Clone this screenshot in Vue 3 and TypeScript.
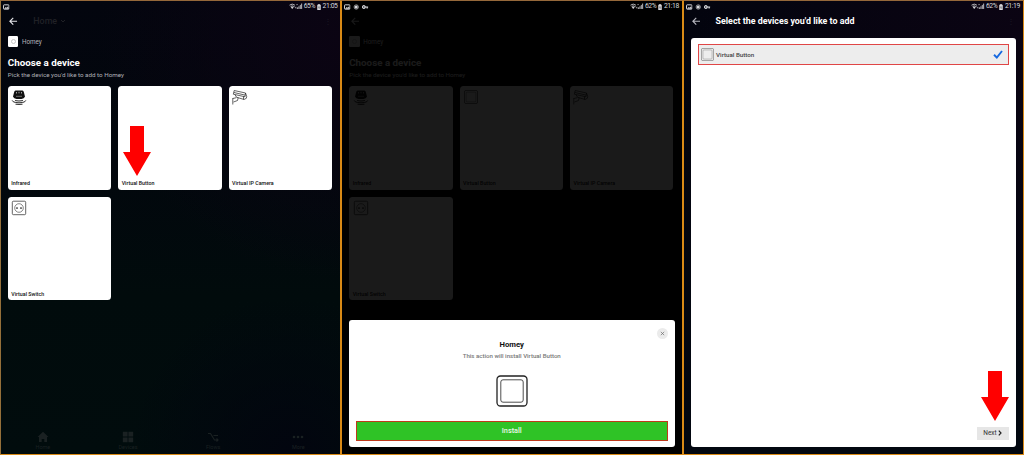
<script setup lang="ts">
interface Device {
  name: string
  icon: string
}

interface NavItem {
  label: string
  icon: string
}

const devices: Device[] = [
  { name: 'Infrared', icon: 'infrared' },
  { name: 'Virtual Button', icon: 'button' },
  { name: 'Virtual IP Camera', icon: 'camera' },
  { name: 'Virtual Switch', icon: 'socket' },
]

const navItems: NavItem[] = [
  { label: 'Home', icon: 'home' },
  { label: 'Devices', icon: 'grid' },
  { label: 'Flows', icon: 'flow' },
  { label: 'More', icon: 'more' },
]

const screens = [
  { id: 'choose', battery: '65%', time: '21:05', notices: ['photo'] },
  { id: 'install', battery: '62%', time: '21:18', notices: ['photo', 'disc', 'key'] },
  { id: 'select', battery: '62%', time: '21:19', notices: ['photo', 'disc', 'key'] },
]
</script>

<template>
  <svg class="defs" width="0" height="0" aria-hidden="true">
    <symbol id="photo" viewBox="0 0 12 10">
      <rect x="1" y="1" width="10" height="8" rx="1" fill="none" stroke="currentColor" stroke-width="1.8" />
      <path d="M2 8l3-3 2 1.5L9 4l2 4z" fill="currentColor" />
    </symbol>
    <symbol id="disc" viewBox="0 0 12 10">
      <circle cx="6" cy="5" r="4" fill="none" stroke="currentColor" stroke-width="1.2" />
      <circle cx="6" cy="5" r="2.8" fill="currentColor" />
    </symbol>
    <symbol id="key" viewBox="0 0 12 10">
      <circle cx="3.4" cy="5" r="2.4" fill="none" stroke="currentColor" stroke-width="2.2" />
      <path d="M5 5h6.5M9.5 5v2.8" stroke="currentColor" stroke-width="2.2" fill="none" />
    </symbol>
    <symbol id="signal" viewBox="0 0 26 12">
      <path d="M1 4q5-4 10 0M3 6.5q3-2.5 6 0" fill="none" stroke="currentColor" stroke-width="1.6" />
      <path d="M4 7.5h4l-2 3zM10 6l3 4M13 7v3" fill="currentColor" stroke="currentColor" stroke-width="1" />
      <path d="M14 2l2 2M16 2l-2 2" stroke="currentColor" />
      <path d="M16 11V8M18.5 11V6M21 11V3.5M23.5 11V1" stroke="currentColor" stroke-width="1.6" />
    </symbol>
    <symbol id="battery" viewBox="0 0 8 12">
      <path d="M2.5 0h3v1.5H7.5V12H.5V1.5h2z" fill="currentColor" />
      <path d="M4.5 4L3 7h2l-1 3" fill="none" stroke="#222" stroke-width=".8" />
    </symbol>
    <symbol id="back" viewBox="0 0 10 10">
      <path d="M9.5 5H1.3M5 1L1 5l4 4" fill="none" stroke="currentColor" stroke-width="1.3" />
    </symbol>
    <symbol id="infrared" viewBox="0 0 16 16">
      <path d="M4.5 1.5h7q1 .2 1.400 1.800l1.100 4.400q-1 2-3.500 2.300h-5Q3 9.700 2 7.700l1.100-4.400Q3.500 1.700 4.500 1.500z" fill="currentColor" />
      <path d="M5.500 3v1.500M8 2.800v1.500M10.500 3v1.500" stroke="#fff" stroke-width=".6" />
      <path d="M5 7.300h6" stroke="#fff" stroke-width=".4" />
      <path d="M4 11.600q4 .8 8 0M1.200 11.400q.3 1.500 3.300 2.100 3.500.6 7 0 3-.6 3.300-2.100M4.500 15.200q3.500.5 7 0" fill="none" stroke="currentColor" stroke-width=".9" />
    </symbol>
    <symbol id="button" viewBox="0 0 32 32">
      <rect x="1" y="1" width="30" height="30" rx="3.5" fill="none" stroke="currentColor" stroke-width="1.3" />
      <rect x="4.8" y="4.8" width="22.4" height="22.4" rx="2.2" fill="none" stroke="currentColor" stroke-width=".8" />
    </symbol>
    <symbol id="camera" viewBox="0 0 16 16">
      <path d="M2.200 1.500L13.500 4 13 7.800 1.300 5.200zM2 3.500l11 2.600M13.500 4l1.200 3.500-.4 1.800-2.300 1.200L4.500 8.200 3 5.700M11.500 7.500v2.800M6.200 8.700L5.500 11.500 1.500 13M.8 9v6.500M.8 9.500l3.500-.8" fill="none" stroke="currentColor" stroke-width=".65" />
    </symbol>
    <symbol id="socket" viewBox="0 0 16 16">
      <rect x="1.300" y="1.200" width="13.400" height="13.500" rx="1.200" fill="none" stroke="currentColor" stroke-width=".65" />
      <circle cx="8" cy="8" r="4.300" fill="none" stroke="currentColor" stroke-width=".5" />
      <circle cx="6" cy="8" r=".85" fill="currentColor" />
      <circle cx="10" cy="8" r=".85" fill="currentColor" />
    </symbol>
    <symbol id="home" viewBox="0 0 12 12">
      <path d="M6 .8L11.500 6H10v5H7.300V8H4.700v3H2V6H.5z" fill="currentColor" />
    </symbol>
    <symbol id="grid" viewBox="0 0 12 12">
      <path d="M.8.8h4.800v4.800H.8zM6.400.8h4.800v4.800H6.400zM.8 6.400h4.800v4.800H.8zM6.400 6.400h4.800v4.800H6.400z" fill="currentColor" />
    </symbol>
    <symbol id="flow" viewBox="0 0 12 12">
      <path d="M1 2.500h2.500l4 6.500H11M6.500 4.500H11M9.500 7.500L11 9 9.500 10.500" fill="none" stroke="currentColor" stroke-width="1.200" />
    </symbol>
    <symbol id="more" viewBox="0 0 12 12">
      <circle cx="2" cy="6" r="1.300" fill="currentColor" />
      <circle cx="6" cy="6" r="1.300" fill="currentColor" />
      <circle cx="10" cy="6" r="1.300" fill="currentColor" />
    </symbol>
    <symbol id="arrow" viewBox="0 0 28 50">
      <path d="M7 0h14v26h7L14 50 0 26h7z" fill="#f00" />
    </symbol>
  </svg>

  <main class="board">
    <section v-for="screen in screens" :key="screen.id" class="screen" :class="screen.id">
      <header class="status">
        <div class="notices">
          <svg v-for="n in screen.notices" :key="n" class="notice"><use :href="'#' + n" /></svg>
        </div>
        <div class="system">
          <svg class="signal"><use href="#signal" /></svg>
          <span class="percent">{{ screen.battery }}</span>
          <svg class="battery"><use href="#battery" /></svg>
          <span class="time">{{ screen.time }}</span>
        </div>
      </header>

      <template v-if="screen.id === 'select'">
        <div class="topbar">
          <svg class="back"><use href="#back" /></svg>
          <h1 class="select-title">Select the devices you'd like to add</h1>
          <span class="plus">⋮</span>
        </div>
        <div class="list-card">
          <div class="device-row">
            <svg class="row-icon"><use href="#button" /></svg>
            <span class="row-name">Virtual Button</span>
            <svg class="check" viewBox="0 0 10 9"><path d="M1 4.800L3.800 7.500 9 1" fill="none" stroke="#1769e0" stroke-width="1.900" /></svg>
          </div>
          <button class="next">
            Next
            <svg class="chevron" viewBox="0 0 4 6"><path d="M.8.7L3 3 .8 5.300" fill="none" stroke="#222" stroke-width="1.200" /></svg>
          </button>
          <svg class="pointer next-pointer"><use href="#arrow" /></svg>
        </div>
      </template>

      <template v-else>
        <div class="page">
          <div class="topbar">
            <svg class="back"><use href="#back" /></svg>
            <span class="home-title">Home</span>
            <svg class="caret" viewBox="0 0 6 4"><path d="M1 1l2 2 2-2" fill="none" stroke="currentColor" /></svg>
            <span class="plus">⋮</span>
          </div>
          <div class="brand">
            <span class="brand-logo"><i class="ring"></i></span>
            <span class="brand-name">Homey</span>
          </div>
          <h2 class="heading">Choose a device</h2>
          <p class="hint">Pick the device you'd like to add to Homey</p>
          <div class="tiles">
            <article v-for="d in devices" :key="d.name" class="tile">
              <svg v-if="d.icon !== 'button' || screen.id === 'install'" class="tile-icon" :class="'is-' + d.icon"><use :href="'#' + d.icon" /></svg>
              <span class="tile-name">{{ d.name }}</span>
              <svg v-if="d.icon === 'button' && screen.id === 'choose'" class="pointer tile-pointer"><use href="#arrow" /></svg>
            </article>
          </div>
          <nav v-if="screen.id === 'choose'" class="nav">
            <div v-for="item in navItems" :key="item.label" class="nav-item">
              <svg class="nav-icon"><use :href="'#' + item.icon" /></svg>
              <span>{{ item.label }}</span>
            </div>
          </nav>
        </div>

        <div v-if="screen.id === 'install'" class="dialog">
          <button class="close" aria-label="Close">
            <svg viewBox="0 0 6 6"><path d="M1 1l4 4M5 1L1 5" stroke="#666" stroke-width=".8" /></svg>
          </button>
          <h3 class="dialog-title">Homey</h3>
          <p class="dialog-text">This action will install Virtual Button</p>
          <svg class="dialog-icon"><use href="#button" /></svg>
          <button class="confirm">Install</button>
        </div>
      </template>
    </section>
  </main>
</template>

<style>
body {
  margin: 0;
  background: #000;
}
</style>

<style scoped>
.defs {
  position: absolute;
}
.board {
  display: grid;
  grid-template-columns: 341px 342px 341px;
  width: 1024px;
  height: 455px;
  font-family: Roboto, "Liberation Sans", sans-serif;
  color: #fff;
  overflow: hidden;
}
.screen {
  position: relative;
  box-sizing: border-box;
  height: 455px;
  border: 1px solid #d98a16;
  border-top-color: #95683a;
  display: flex;
  flex-direction: column;
}
.choose {
  border-left-color: #95703a;
  background: radial-gradient(circle at 100% 8%, #0b0413 0%, transparent 45%),
    radial-gradient(circle at 85% 100%, #02050f 0%, transparent 30%),
    linear-gradient(180deg, #03050e 0%, #02070d 35%, #010b0c 65%, #010c0d 100%);
}
.install {
  background: #000;
}
.select {
  background: radial-gradient(circle at 100% 5%, #0b0413 0%, transparent 60%),
    linear-gradient(180deg, #03040e 0%, #020710 100%);
}
.status {
  display: flex;
  justify-content: space-between;
  align-items: center;
  height: 11px;
  padding: 0 2.5px 0 2px;
  margin-bottom: -1px;
  font-size: 6.8px;
  line-height: 11px;
  color: #d8d8dc;
}
.install .status,
.select .status {
  padding-right: 3.2px;
}
.notices,
.system {
  display: flex;
  align-items: center;
}
.notices {
  gap: 2.5px;
}
.notice {
  width: 6.5px;
  height: 6px;
}
.signal {
  width: 14px;
  height: 6.5px;
  margin-right: 0.5px;
}
.percent,
.time {
  letter-spacing: -0.4px;
}
.battery {
  width: 4px;
  height: 6px;
  margin: 0 2px 0 1.5px;
}
.page {
  flex: 1;
  display: flex;
  flex-direction: column;
  padding: 0 8px 0 6.8px;
}
.install .page {
  opacity: 0.1;
  padding-left: 7.2px;
}
.topbar {
  display: flex;
  align-items: center;
  height: 20px;
}
.back {
  width: 8.5px;
  height: 8.5px;
  margin-left: 1.5px;
  color: #e6e6ea;
}
.home-title {
  margin-left: 15.5px;
  font-size: 8.9px;
  font-weight: 500;
  line-height: 20px;
  color: #202126;
}
.caret {
  width: 6px;
  height: 4px;
  margin-left: 3px;
  color: #202126;
}
.plus {
  margin-left: auto;
  font-size: 8px;
  color: #1b1824;
}
.install .home-title,
.install .caret,
.install .plus {
  visibility: hidden;
}
.brand {
  display: flex;
  align-items: center;
  gap: 3.5px;
  margin-top: 5px;
  height: 11px;
}
.brand-logo {
  display: grid;
  place-items: center;
  width: 10.6px;
  height: 10.6px;
  border-radius: 1.2px;
  background: #fff;
}
.ring {
  box-sizing: border-box;
  width: 5px;
  height: 5px;
  border: 1px solid #c4c4c4;
  border-radius: 50%;
}
.brand-name {
  font-size: 6.3px;
  color: #b4b5ba;
}
.heading {
  margin: 9px 0 0;
  font-size: 9.8px;
  font-weight: 700;
  line-height: 14px;
}
.hint {
  margin: 0;
  font-size: 6.25px;
  line-height: 10px;
  color: #b0b1b6;
}
.install .brand-name,
.install .hint {
  color: #fff;
}
.tiles {
  display: grid;
  grid-template-columns: repeat(3, 103.4px);
  grid-auto-rows: 103.5px;
  gap: 7px;
  margin-top: 6px;
}
.tile {
  position: relative;
  display: flex;
  flex-direction: column;
  box-sizing: border-box;
  padding: 3px 3.5px 2.5px;
  border-radius: 3.5px;
  background: #fff;
  color: #111;
}
.tile-icon {
  width: 16px;
  height: 16px;
}
.is-button {
  padding: 1px;
  box-sizing: border-box;
}
.tile-name {
  margin-top: auto;
  font-size: 5.3px;
  font-weight: 500;
  line-height: 8px;
}
.pointer {
  position: absolute;
  width: 28px;
  height: 50px;
}
.tile-pointer {
  left: 5px;
  top: 40px;
}
.nav {
  display: flex;
  margin: auto -9px 0 -7.5px;
  padding-bottom: 3px;
  color: #1a2122;
}
.nav-item {
  flex: 1;
  display: flex;
  flex-direction: column;
  align-items: center;
  font-size: 5.5px;
  line-height: 7px;
}
.nav-icon {
  width: 12px;
  height: 12px;
  margin-bottom: 1px;
}
.dialog {
  position: absolute;
  left: 7px;
  right: 7.5px;
  top: 319.3px;
  height: 126.4px;
  box-sizing: border-box;
  padding: 7.5px 7px 6px;
  border-radius: 3px;
  background: #fff;
  color: #111;
  display: flex;
  flex-direction: column;
  align-items: center;
}
.close {
  align-self: flex-end;
  display: grid;
  place-items: center;
  width: 11px;
  height: 11px;
  padding: 0;
  border: 0;
  border-radius: 50%;
  background: #ebebeb;
}
.close svg {
  width: 5px;
  height: 5px;
}
.dialog-title {
  margin: 1px 0 0;
  font-size: 7.7px;
  font-weight: 700;
  line-height: 10px;
}
.dialog-text {
  margin: 1px 0 0;
  font-size: 6.1px;
  font-weight: 500;
  line-height: 10px;
  color: #777;
}
.dialog-icon {
  width: 32px;
  height: 32px;
  margin-top: 14px;
  color: #222;
}
.confirm {
  align-self: stretch;
  height: 20px;
  margin-top: auto;
  padding: 0;
  border: 1px solid #bf3a1b;
  background: #2fc326;
  color: #e9f8e7;
  font: 500 7.3px/18px Roboto, "Liberation Sans", sans-serif;
}
.select .topbar {
  padding: 0 8px 0 6px;
}
.select .back {
  color: #b8b8c0;
}
.select-title {
  margin: 0 0 0 15.5px;
  font-size: 8.9px;
  font-weight: 700;
  line-height: 20px;
}
.list-card {
  position: relative;
  flex: 1;
  box-sizing: border-box;
  margin: 7px 7.5px 7.5px 6.6px;
  padding: 6px 7px 7px;
  border-radius: 3px;
  background: #fff;
  display: flex;
  flex-direction: column;
}
.device-row {
  display: flex;
  align-items: center;
  box-sizing: border-box;
  height: 21px;
  padding: 0 5px 0 2px;
  border: 1px solid #e04646;
  background: #ededed;
}
.row-icon {
  width: 13px;
  height: 13px;
  color: #555;
}
.row-name {
  margin-left: 2.5px;
  font-size: 6.2px;
  font-weight: 500;
  color: #444;
}
.check {
  width: 10px;
  height: 9px;
  margin-left: auto;
}
.next {
  align-self: flex-end;
  display: flex;
  align-items: center;
  justify-content: center;
  gap: 1px;
  width: 32px;
  height: 12.5px;
  margin-top: auto;
  padding: 0;
  border: 0;
  background: #e6e6e6;
  color: #333;
  font: 400 6.5px/12px Roboto, "Liberation Sans", sans-serif;
}
.chevron {
  width: 4px;
  height: 6px;
}
.next-pointer {
  right: 6.5px;
  bottom: 25.5px;
}
</style>
